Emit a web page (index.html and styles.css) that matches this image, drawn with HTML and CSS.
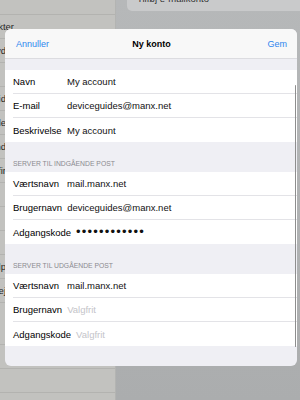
FILE: index.html
```html
<!DOCTYPE html>
<html lang="da">
<head>
<meta charset="utf-8">
<title>Ny konto</title>
<link rel="stylesheet" href="styles.css">
</head>
<body>
<div class="screen">
  <aside class="sidebar">
    <div class="srow stop"></div>
    <div class="srow first"><span class="slbl">Kontakter</span></div>
    <div class="srow"><span class="slbl">Lyd</span></div>
    <div class="srow"><span class="slbl"></span></div>
    <div class="srow"><span class="slbl">Skærmtid</span></div>
    <div class="srow"><span class="slbl">Billede</span></div>
    <div class="srow"><span class="slbl">Baggrund</span></div>
    <div class="srow"><span class="slbl">Safir</span></div>
    <div class="srow"><span class="slbl"></span></div>
    <div class="srow"><span class="slbl"></span></div>
    <div class="srow"><span class="slbl"></span></div>
    <div class="srow"><span class="slbl">Hjælp</span></div>
    <div class="srow"><span class="slbl">Vej</span></div>
    <div class="sgap"></div>
    <div class="srow"><span class="slbl"></span></div>
    <div class="srow"><span class="slbl"></span></div>
    <div class="srow"><span class="slbl"></span></div>
    <div class="srow"><span class="slbl"></span></div>
  </aside>
  <main class="pane">
    <div class="pane-top">
      <div class="pill">Tilføj e-mailkonto</div>
    </div>
  </main>

  <div class="modal">
    <div class="mhead">
      <span class="link">Annuller</span>
      <span class="title">Ny konto</span>
      <span class="link right">Gem</span>
    </div>
    <div class="spacer"></div>
    <div class="group">
      <div class="row"><div class="cell"><span class="lbl">Navn</span><span class="val">My account</span></div></div>
      <div class="row"><div class="cell"><span class="lbl">E-mail</span><span class="val">deviceguides@manx.net</span></div></div>
      <div class="row"><div class="cell"><span class="lbl">Beskrivelse</span><span class="val">My account</span></div></div>
    </div>
    <div class="shead">SERVER TIL INDGÅENDE POST</div>
    <div class="group">
      <div class="row"><div class="cell"><span class="lbl">Værtsnavn</span><span class="val">mail.manx.net</span></div></div>
      <div class="row"><div class="cell"><span class="lbl">Brugernavn</span><span class="val">deviceguides@manx.net</span></div></div>
      <div class="row"><div class="cell"><span class="lbl">Adgangskode</span><span class="val dots">••••••••••••</span></div></div>
    </div>
    <div class="shead">SERVER TIL UDGÅENDE POST</div>
    <div class="group">
      <div class="row"><div class="cell"><span class="lbl">Værtsnavn</span><span class="val">mail.manx.net</span></div></div>
      <div class="row"><div class="cell"><span class="lbl">Brugernavn</span><span class="val ph">Valgfrit</span></div></div>
      <div class="row"><div class="cell"><span class="lbl">Adgangskode</span><span class="val ph">Valgfrit</span></div></div>
    </div>
    <div class="scrollbar"></div>
  </div>
</div>
</body>
</html>
```

FILE: styles.css
```css
* { box-sizing: border-box; }

html, body {
  margin: 0;
  padding: 0;
}

body {
  width: 300px;
  height: 400px;
  overflow: hidden;
  font-family: "Liberation Sans", Arial, sans-serif;
  color: #000;
}

.screen {
  position: relative;
  display: flex;
  width: 300px;
  height: 400px;
  overflow: hidden;
}

/* ---------- background: settings sidebar ---------- */
.sidebar {
  flex: none;
  width: 116px;
  background: #c2c2bf;
  border-right: 1px solid #b3b4b2;
  display: flex;
  flex-direction: column;
}

.srow {
  flex: none;
  height: 24px;
  border-bottom: 1px solid #b3b3b0;
  display: flex;
  align-items: center;
  font-size: 9.5px;
  color: #2a2a2a;
}

.srow.stop {
  height: 15px;
}

.slbl {
  flex: none;
  width: 60px;
  margin-left: -54px;
  text-align: right;
  white-space: nowrap;
}

.srow.first .slbl {
  margin-left: -46px;
}

.sgap {
  flex: none;
  height: 18px;
}

/* ---------- background: right pane ---------- */
.pane {
  flex: 1;
  background: linear-gradient(#b6b8b9, #abadae);
}

.pane-top {
  display: flex;
  height: 13px;
}

.pill {
  flex: 1;
  margin: -14px -10px 0 11px;
  height: 25px;
  background: #c9cacb;
  border-radius: 5px;
  display: flex;
  align-items: flex-end;
  padding: 0 0 7px 10px;
  font-size: 9.5px;
  line-height: 11px;
  color: #333;
}

/* ---------- modal ---------- */
.modal {
  position: absolute;
  left: 5px;
  top: 29px;
  width: 292px;
  height: 337px;
  background: #efeff4;
  border-radius: 6px;
  overflow: hidden;
}

.mhead {
  height: 30px;
  background: #f8f8f8;
  border-bottom: 1px solid #dcdce0;
  display: grid;
  grid-template-columns: 1fr auto 1fr;
  align-items: center;
  padding: 0 10px 0 11px;
  font-size: 9px;
}

.link {
  color: #2f86ee;
}

.link.right {
  justify-self: end;
}

.title {
  font-weight: bold;
}

.spacer {
  height: 11px;
}

.group {
  background: #fff;
}

.row {
  height: 24px;
  padding-left: 8px;
  display: flex;
}

.cell {
  flex: 1;
  display: flex;
  align-items: center;
  border-bottom: 1px solid #e3e3e7;
  font-size: 9.5px;
  white-space: nowrap;
}

.row:last-child .cell {
  border-bottom: none;
}

.lbl {
  flex: none;
  min-width: 49px;
  margin-right: 5px;
  color: #000;
}

.val {
  color: #111;
}

.val.ph {
  color: #c4c4c9;
}

.val.dots {
  font-size: 13px;
  letter-spacing: 1.2px;
  line-height: 10px;
}

.shead {
  height: 30px;
  padding: 0 0 4px 8px;
  display: flex;
  align-items: flex-end;
  font-size: 6.8px;
  line-height: 8px;
  color: #8a8a8f;
}

.scrollbar {
  position: absolute;
  right: 1px;
  top: 56px;
  width: 1.5px;
  height: 262px;
  background: #8e8e8e;
  border-radius: 1px;
}
```
